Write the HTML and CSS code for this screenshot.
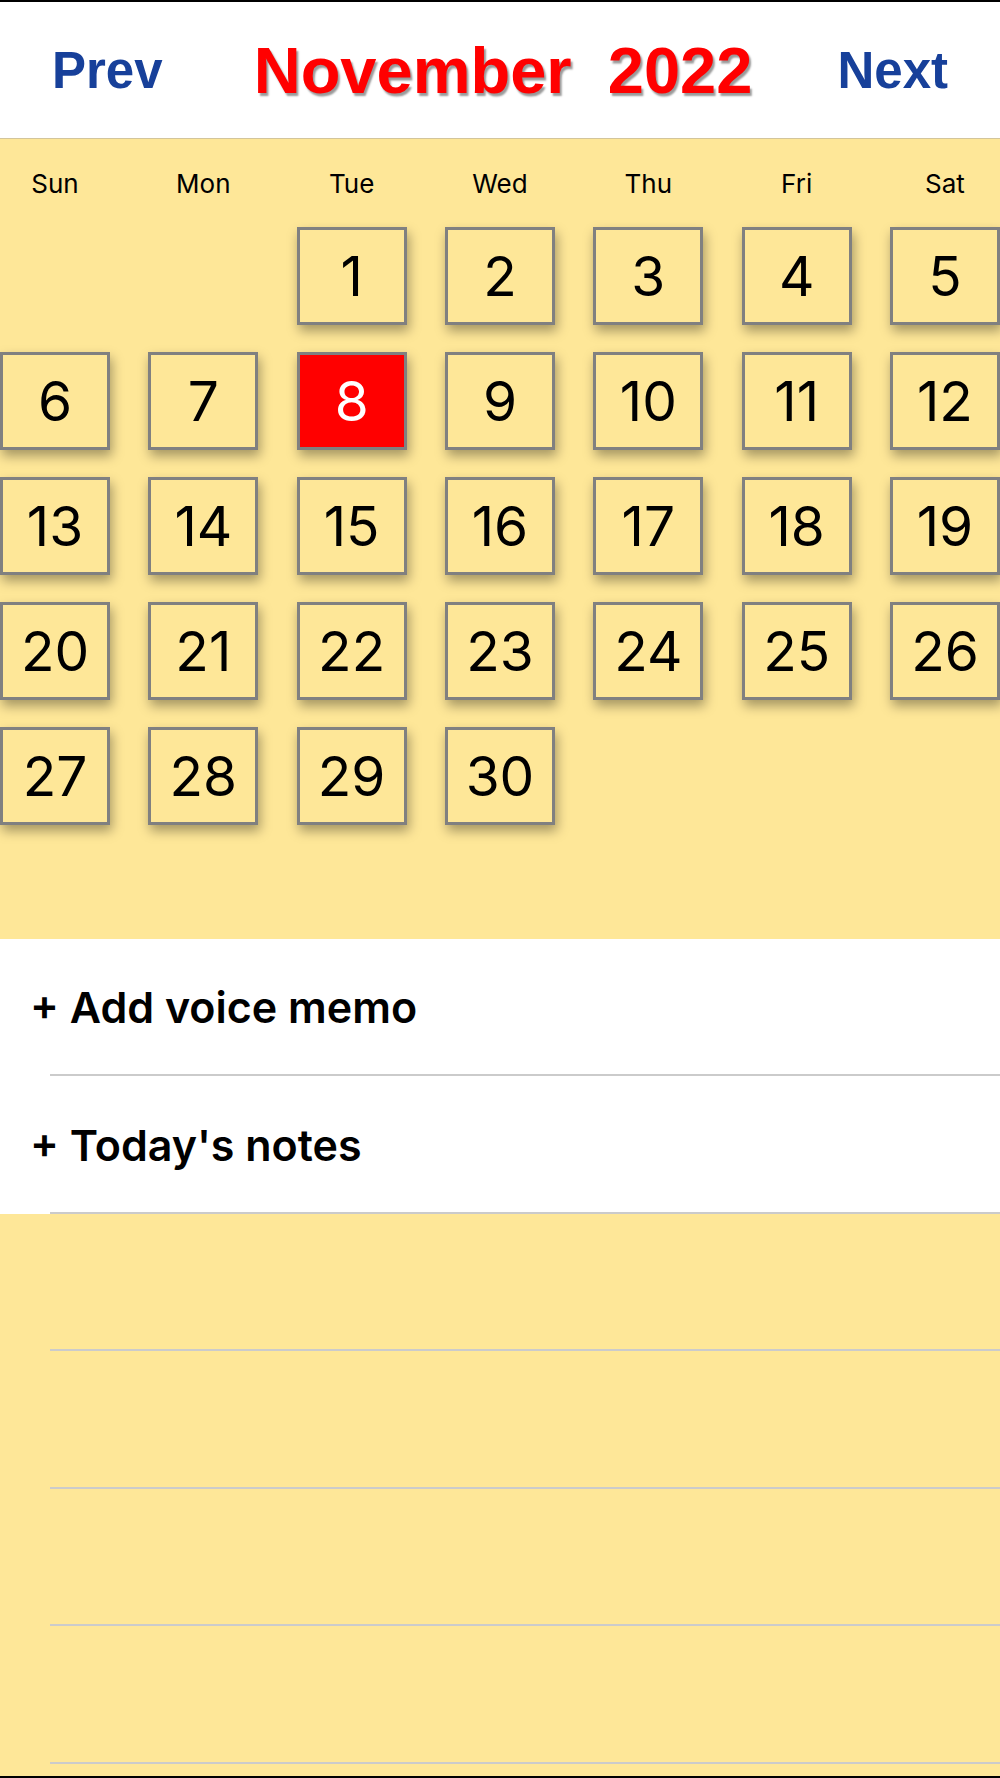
FILE: index.html
```html
<!DOCTYPE html>
<html lang="en">
<head>
  <meta charset="UTF-8" />
  <meta name="viewport" content="width=device-width, initial-scale=1.0"/>
  <title>Calendar</title>
  <link rel="stylesheet" href="styles.css">
</head>
<body>
  <div class="screen">

    <!-- HEADER -->
    <div class="top-bar">
      <a class="nav-btn" href="#">Prev</a>
      <h1 class="month-title">November  2022</h1>
      <a class="nav-btn" href="#">Next</a>
    </div>

    <!-- CALENDAR -->
    <div class="calendar">
      <div class="weekdays">
        <span>Sun</span><span>Mon</span><span>Tue</span><span>Wed</span><span>Thu</span><span>Fri</span><span>Sat</span>
      </div>
      <div class="days">
        <div class="day empty"></div>
        <div class="day empty"></div>
        <div class="day">1</div>
        <div class="day">2</div>
        <div class="day">3</div>
        <div class="day">4</div>
        <div class="day">5</div>
        <div class="day">6</div>
        <div class="day">7</div>
        <div class="day today">8</div>
        <div class="day">9</div>
        <div class="day">10</div>
        <div class="day">11</div>
        <div class="day">12</div>
        <div class="day">13</div>
        <div class="day">14</div>
        <div class="day">15</div>
        <div class="day">16</div>
        <div class="day">17</div>
        <div class="day">18</div>
        <div class="day">19</div>
        <div class="day">20</div>
        <div class="day">21</div>
        <div class="day">22</div>
        <div class="day">23</div>
        <div class="day">24</div>
        <div class="day">25</div>
        <div class="day">26</div>
        <div class="day">27</div>
        <div class="day">28</div>
        <div class="day">29</div>
        <div class="day">30</div>
      </div>
    </div>

    <!-- ACTIONS -->
    <div class="entries">
      <a class="entry" href="#">+ Add voice memo</a>
      <a class="entry" href="#">+ Today's notes</a>
    </div>

    <!-- EMPTY NOTE LINES -->
    <div class="lines">
      <div class="line"></div>
      <div class="line"></div>
      <div class="line"></div>
      <div class="line"></div>
    </div>

  </div>
</body>
</html>
```

FILE: styles.css
```css
* { margin: 0; padding: 0; box-sizing: border-box; }
html, body {
  height: 100%;
  font-family: Inter, 'Liberation Sans', sans-serif;
  background-color: #fee798;
  color: #000;
  overflow: hidden;
}

.screen {
  height: 1778px;
  border-top: 2px solid #000;
  border-bottom: 2px solid #000;
  background-color: #fee798;
  overflow: hidden;
}

/* header */
.top-bar {
  height: 137px;
  background: #fff;
  border-bottom: 1px solid #d3c59b;
  display: flex;
  justify-content: space-between;
  align-items: center;
  padding: 0 52px;
  font-family: 'Liberation Sans', Arial, sans-serif;
  font-weight: bold;
}

.nav-btn {
  font-size: 51px;
  color: #17409a;
  text-decoration: none;
}

.month-title {
  font-size: 65px;
  color: #ff0000;
  white-space: pre;
  text-shadow: 2px 3px 2px rgba(0, 0, 0, 0.4);
  margin-left: 6px;
}

/* calendar */
.calendar {
  padding: 30px 0 113.5px;
}

.weekdays,
.days {
  display: grid;
  grid-template-columns: repeat(7, 110px);
  justify-content: space-between;
}

.weekdays span {
  text-align: center;
  font-size: 26px;
  line-height: 30px;
}

.days {
  margin-top: 28px;
  row-gap: 27px;
}

.day {
  height: 98px;
  border: 3px solid #808080;
  background: #fee798;
  box-shadow: 2px 6px 11px rgba(0, 0, 0, 0.35);
  display: flex;
  justify-content: center;
  align-items: center;
  font-size: 55px;
  line-height: 1;
}

.day.empty {
  visibility: hidden;
}

.day.today {
  background: #ff0000;
  color: #fff;
}

/* actions + ruled lines */
.entry,
.line {
  display: flex;
  align-items: center;
  height: 137.5px;
  background-image: linear-gradient(#cbcbcb, #cbcbcb);
  background-repeat: no-repeat;
  background-position: 50px 100%;
  background-size: calc(100% - 50px) 2px;
}

.entry {
  background-color: #fff;
  padding-left: 30px;
  font-size: 43px;
  font-weight: 600;
  color: #000;
  text-decoration: none;
}
```
